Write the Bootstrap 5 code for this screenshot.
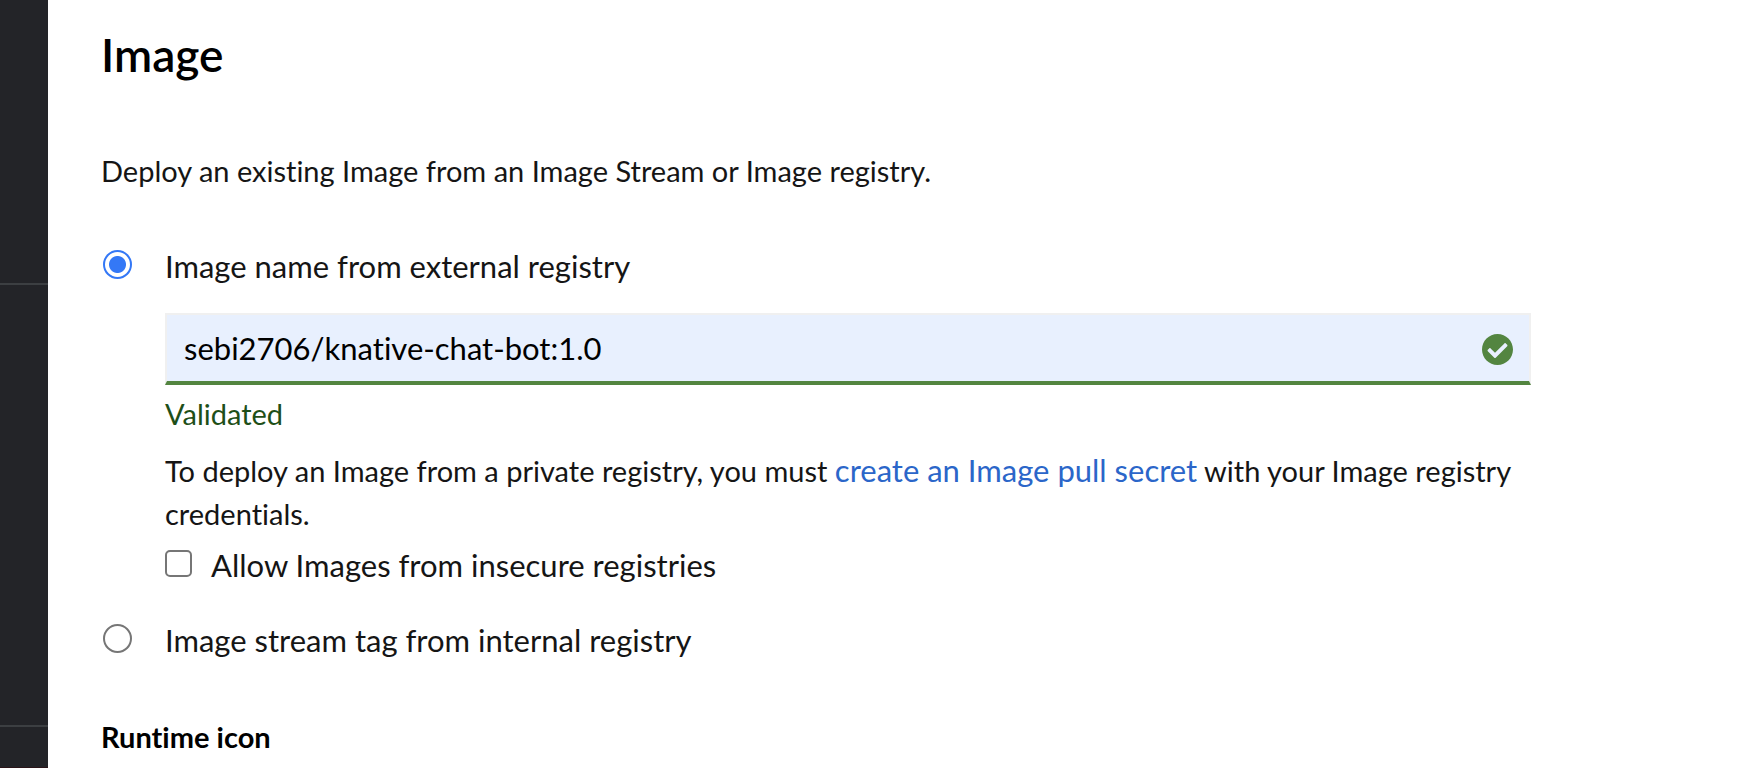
<!DOCTYPE html>
<html lang="en">
<head>
<meta charset="utf-8">
<meta name="viewport" content="width=device-width, initial-scale=1">
<title>Deploy Image</title>
<link href="https://cdn.jsdelivr.net/npm/bootstrap@5.3.0/dist/css/bootstrap.min.css" rel="stylesheet">
<style>
  body { font-family: Lato, "Liberation Sans", sans-serif; font-variant-ligatures: none; font-size: 29px; line-height: 43px; color: #151515; background: #fff; }
  .side-strip { width: 48px; background: #232428; border-bottom: 1px solid #2b1519; }
  .side-strip hr { margin: 0; border: 0; border-top: 2px solid #3c3f42; opacity: 1; }
  .side-top { height: 283px; }
  .side-mid { height: 440px; }
  .page-body { padding: 27px 213px 10px 53px; }
  .page-title { font-size: 46px; line-height: 56px; font-weight: 600; color: #000; margin-bottom: 66px; }
  .intro { margin-bottom: 51px; }
  .option-text { font-size: 31px; line-height: 46px; }
  .option-radio { width: 64px; padding: 7px 0 0 2px; }
  .form-check-input.pick { width: 29px; height: 29px; margin: 0; border: 2px solid #767676; box-shadow: none; display: block; float: none; }
  .form-check-input.pick:checked { background: radial-gradient(circle, #3478f6 8px, #fff 9px); border-color: #3478f6; }
  .form-check-input.box { width: 27px; height: 27px; margin: 8px 19px 0 0; border: 2px solid #767676; border-radius: 5px; box-shadow: none; float: none; }
  .image-field { margin: 24px 0 7px; }
  .image-field .form-control { height: 72px; padding: 0 64px 0 17px; font-size: 31px; line-height: 46px; color: #000; background: #e8f0fe; border: 2px solid #f0f0f0; border-bottom: 4px solid #538540; border-radius: 0; font-variant-ligatures: none; }
  .valid-mark { right: 18px; top: 21px; width: 31px; height: 31px; }
  .valid-note { color: #1e4f18; margin-bottom: 14px; }
  .secret-note { margin-bottom: 7px; }
  .secret-note a { font-size: 31px; line-height: 1; color: #2b66c9; text-decoration: none; }
  .option-next { margin-top: 29px; }
  .section-title { font-size: 29px; line-height: 43px; font-weight: 700; color: #000; margin: 52px 0 0; }
</style>
</head>
<body>
<div class="d-flex min-vh-100">
  <aside class="side-strip flex-shrink-0">
    <div class="side-top"></div>
    <hr>
    <div class="side-mid"></div>
    <hr>
  </aside>
  <main class="page-body flex-grow-1">
    <h1 class="page-title">Image</h1>
    <p class="intro">Deploy an existing Image from an Image Stream or Image registry.</p>
    <form>
      <div class="d-flex">
        <div class="option-radio flex-shrink-0">
          <input class="form-check-input pick" type="radio" name="source" id="external" checked>
        </div>
        <div class="flex-grow-1">
          <label class="option-text d-block" for="external">Image name from external registry</label>
          <div class="image-field position-relative">
            <input class="form-control" type="text" id="imageName" aria-label="Image name" value="sebi2706/knative-chat-bot:1.0">
            <svg class="valid-mark position-absolute" viewBox="8 8 496 496" aria-hidden="true">
              <path fill="#538540" d="M504 256c0 136.967-111.033 248-248 248S8 392.967 8 256 119.033 8 256 8s248 111.033 248 248zM227.314 387.314l184-184c6.248-6.248 6.248-16.379 0-22.627l-22.627-22.627c-6.248-6.249-16.379-6.249-22.628 0L216 308.118l-70.059-70.059c-6.248-6.248-16.379-6.248-22.628 0l-22.627 22.627c-6.248 6.248-6.248 16.379 0 22.627l104 104c6.249 6.249 16.379 6.249 22.628.001z"/>
            </svg>
          </div>
          <div class="valid-note">Validated</div>
          <p class="secret-note">To deploy an Image from a private registry, you must <a href="#">create an Image pull secret</a> with your Image registry credentials.</p>
          <div class="d-flex">
            <input class="form-check-input box flex-shrink-0" type="checkbox" id="insecure">
            <label class="option-text" for="insecure">Allow Images from insecure registries</label>
          </div>
        </div>
      </div>
      <div class="option-next d-flex">
        <div class="option-radio flex-shrink-0">
          <input class="form-check-input pick" type="radio" name="source" id="internal">
        </div>
        <label class="option-text" for="internal">Image stream tag from internal registry</label>
      </div>
      <h2 class="section-title">Runtime icon</h2>
    </form>
  </main>
</div>
<script src="https://cdn.jsdelivr.net/npm/bootstrap@5.3.0/dist/js/bootstrap.bundle.min.js"></script>
</body>
</html>
